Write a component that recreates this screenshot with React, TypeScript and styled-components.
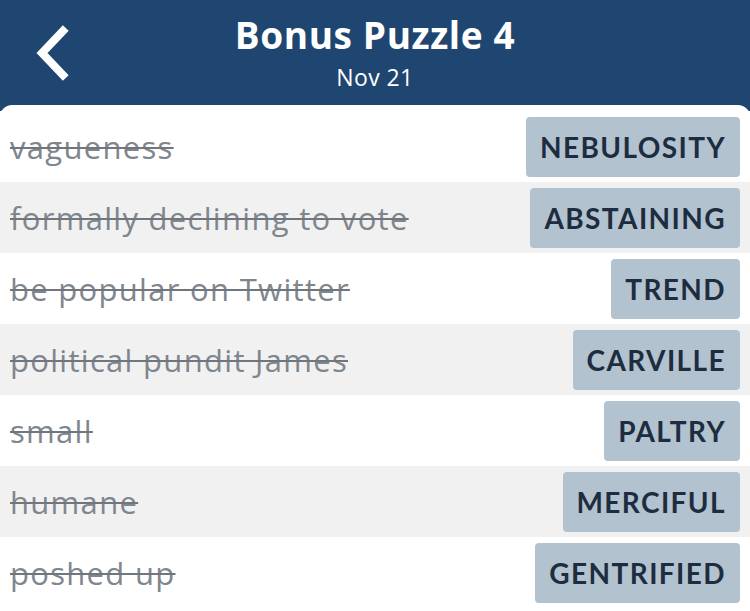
import styled, { createGlobalStyle } from "styled-components";

const GlobalStyle = createGlobalStyle`
  html, body {
    margin: 0;
    padding: 0;
    background: #1f4670;
  }
  body {
    font-family: "Open Sans", "Lato", sans-serif;
  }
`;

const Screen = styled.div`
  width: 750px;
  height: 611px;
  overflow: hidden;
  background: #1f4670;
  display: flex;
  flex-direction: column;
`;

const Header = styled.header`
  height: 105px;
  flex-shrink: 0;
  display: flex;
  align-items: flex-start;
  position: relative;
`;

const BackButton = styled.button`
  position: absolute;
  left: 29px;
  top: 22px;
  width: 46px;
  height: 62px;
  border: 0;
  padding: 0;
  background: transparent;
  display: flex;
  align-items: center;
  justify-content: center;
`;

const TitleBlock = styled.div`
  flex: 1;
  display: flex;
  flex-direction: column;
  align-items: center;
  color: #ffffff;
  padding-top: 10px;
`;

const Title = styled.h1`
  margin: 0;
  font-size: 37px;
  font-weight: 700;
  line-height: 50px;
  letter-spacing: 0.6px;
`;

const Subtitle = styled.div`
  font-size: 23px;
  line-height: 34px;
  letter-spacing: 0.4px;
`;

const Card = styled.main`
  flex: 1;
  background: #ffffff;
  border-radius: 12px 12px 0 0;
  padding-top: 6px;
  display: flex;
  flex-direction: column;
`;

const Row = styled.div<{ $shade: boolean }>`
  height: 71px;
  flex-shrink: 0;
  display: flex;
  align-items: center;
  justify-content: space-between;
  padding: 0 10px 0 10px;
  background: ${(p) => (p.$shade ? "#f1f1f1" : "#ffffff")};
`;

const Clue = styled.span`
  font-size: 31px;
  letter-spacing: 1.3px;
  color: #80868d;
  text-decoration: line-through;
  text-decoration-thickness: 1.5px;
  text-decoration-color: #6f767d;
  white-space: nowrap;
`;

const Answer = styled.div`
  height: 60px;
  padding: 0 14px;
  background: #b2c2cf;
  border-radius: 4px;
  display: flex;
  align-items: center;
  font-family: "Lato", "Open Sans", sans-serif;
  font-size: 28px;
  font-weight: 700;
  letter-spacing: 1.4px;
  color: #1d2d3f;
`;

const entries = [
  ["vagueness", "NEBULOSITY"],
  ["formally declining to vote", "ABSTAINING"],
  ["be popular on Twitter", "TREND"],
  ["political pundit James", "CARVILLE"],
  ["small", "PALTRY"],
  ["humane", "MERCIFUL"],
  ["poshed up", "GENTRIFIED"],
];

export default function App() {
  return (
    <Screen>
      <GlobalStyle />
      <Header>
        <BackButton aria-label="Back">
          <svg width="40" height="56" viewBox="0 0 40 56">
            <path
              d="M31 6 L10 28 L31 50"
              fill="none"
              stroke="#ffffff"
              strokeWidth="8"
              strokeLinecap="square"
            />
          </svg>
        </BackButton>
        <TitleBlock>
          <Title>Bonus Puzzle 4</Title>
          <Subtitle>Nov 21</Subtitle>
        </TitleBlock>
      </Header>
      <Card>
        {entries.map(([clue, answer], i) => (
          <Row key={answer} $shade={i % 2 === 1}>
            <Clue>{clue}</Clue>
            <Answer>{answer}</Answer>
          </Row>
        ))}
      </Card>
    </Screen>
  );
}
